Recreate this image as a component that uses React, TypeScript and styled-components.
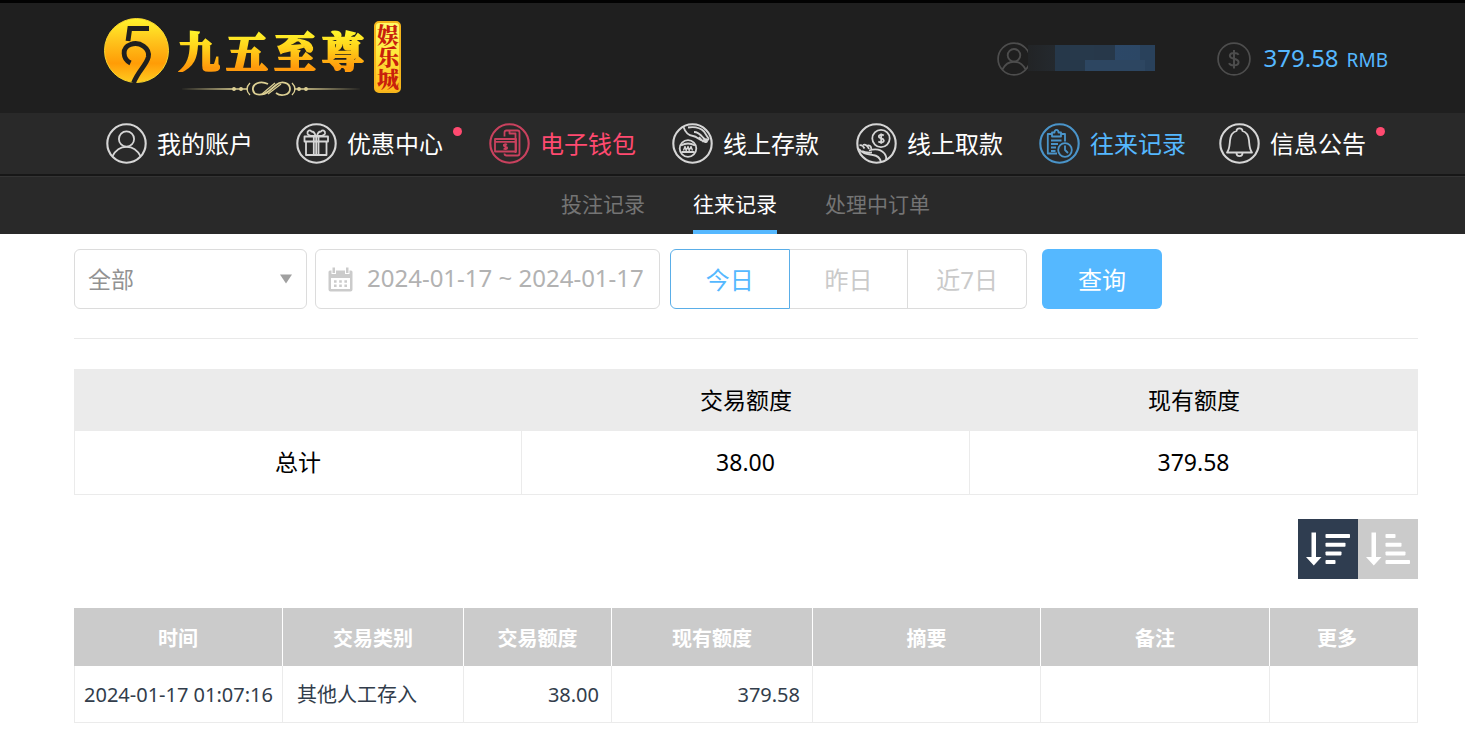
import React from 'react';
import styled, { createGlobalStyle } from 'styled-components';

const blue = '#55b8ff';
const pink = '#ff4a70';
const serif = '"Noto Serif CJK SC", "Noto Sans CJK SC", serif';

const GlobalStyle = createGlobalStyle`
  *, *::before, *::after { box-sizing: border-box; }
  body {
    margin: 0;
    background: #fff;
    color: #000;
    font-family: "Noto Sans", "Noto Sans CJK SC", sans-serif;
  }
  button, input, select { font-family: inherit; margin: 0; }
  a { color: inherit; text-decoration: none; }
`;

const Masthead = styled.header`
  border-top: 3px solid #020202;
  background: #1f1f1f;
`;

const TopBar = styled.div`
  display: flex;
  align-items: center;
  justify-content: space-between;
  height: 110px;
  padding: 0 77px 0 104px;
`;

const Logo = styled.a`
  display: flex;
  align-items: flex-start;
  height: 80px;
`;

const LogoText = styled.span`
  display: flex;
  flex-direction: column;
  margin: 10px 10px 0 8px;
`;

const LogoName = styled.span`
  display: flex;
  gap: 6px;
  font-family: ${serif};
  font-size: 42px;
  font-weight: 900;
  line-height: 44px;

  span {
    background: linear-gradient(#fff32a 10%, #ffd21a 45%, #ff9a0c 90%);
    background-clip: text;
    -webkit-background-clip: text;
    -webkit-text-stroke: 2px transparent;
    color: transparent;
  }
`;

const Flourish = styled.svg`
  display: block;
  margin-top: 8px;
`;

const LogoTag = styled.span`
  display: flex;
  align-items: center;
  justify-content: center;
  width: 27px;
  height: 72px;
  margin-top: 3px;
  border: 2px solid #f5b51c;
  border-radius: 5px;
  background: linear-gradient(#fffb6a, #ffe93c 45%, #ffb81c);
  color: #c8200c;
  font-family: ${serif};
  font-size: 22px;
  font-weight: 900;
  line-height: 24px;
  writing-mode: vertical-rl;
`;

const Status = styled.div`
  display: flex;
  align-items: center;
  gap: 62px;
  margin-top: 2px;
`;

const StatusItem = styled.div`
  display: flex;
  align-items: center;
`;

const HiddenName = styled.span`
  width: 127px;
  height: 26px;
  margin: 0 0 2px -3px;
  background:
    linear-gradient(#27394b, #27394b) 42px 0 / 24px 15px no-repeat,
    linear-gradient(#27384a, #27384a) 57px 0 / 30px 15px no-repeat,
    linear-gradient(#2d4661, #2d4661) 57px 15px / 60px 11px no-repeat,
    linear-gradient(90deg, #222426, #24292e 27px, #26384a 27px, #26384a 57px, #2c4869 57px, #2c4765 112px, #29415b 112px);
`;

const Balance = styled.span`
  display: flex;
  align-items: baseline;
  gap: 8px;
  margin-left: 13px;
  color: ${blue};
  font-size: 24px;
  line-height: 34px;

  small { font-size: 19px; }
`;

const MainNav = styled.nav`
  display: grid;
  grid-template-columns: 190fr 193fr 183fr 184fr 183fr 180fr 168fr;
  align-items: center;
  height: 63px;
  padding: 0 78px 0 106px;
  border-bottom: 2px solid #171717;
  background: #292929;
`;

const NavLink = styled.a<{ $tone?: string }>`
  display: flex;
  align-items: center;
  gap: 10px;
  color: ${p => p.$tone || '#fff'};
  font-size: 24px;
  line-height: 36px;
  white-space: nowrap;

  svg { flex: none; color: ${p => p.$tone || '#d6d6d6'}; opacity: ${p => (p.$tone ? 0.75 : 1)}; }
`;

const Dot = styled.i`
  align-self: flex-start;
  width: 9px;
  height: 9px;
  margin-top: 4px;
  border-radius: 50%;
  background: ${pink};
`;

const SubNav = styled.nav`
  display: flex;
  justify-content: center;
  gap: 48px;
  height: 58px;
  padding-left: 26px;
  border-top: 1px solid #343434;
  background: #292929;
`;

const SubLink = styled.a<{ $active?: boolean }>`
  border-bottom: 4px solid ${p => (p.$active ? blue : 'transparent')};
  color: ${p => (p.$active ? '#fff' : '#747474')};
  font-size: 21px;
  line-height: 54px;
`;

const Content = styled.main`
  padding: 15px 47px 6px 74px;
`;

const Filters = styled.form`
  display: flex;
  padding-bottom: 29px;
  border-bottom: 1px solid #e9e9e9;
`;

const Field = styled.div<{ $width: number }>`
  position: relative;
  display: flex;
  width: ${p => p.$width}px;
  height: 60px;
  border: 1px solid #dcdcdc;
  border-radius: 6px;

  & + & { margin-left: 8px; }
  svg { position: absolute; top: 0; bottom: 0; margin: auto 0; pointer-events: none; }
`;

const SelectArrow = styled.svg`
  right: 14px;
`;

const CalendarIcon = styled.svg`
  left: 12px;
`;

const TypeSelect = styled.select`
  flex: 1;
  appearance: none;
  padding: 0 40px 0 13px;
  border: 0;
  border-radius: 6px;
  background: transparent;
  color: #929292;
  font-size: 23px;
`;

const DateInput = styled.input`
  flex: 1;
  min-width: 0;
  padding: 0 0 4px 51px;
  border: 0;
  border-radius: 6px;
  background: transparent;
  color: #b2b2b2;
  font-size: 24px;
`;

const Segments = styled.div`
  display: flex;
  width: 357px;
  margin: 0 15px 0 10px;
`;

const Segment = styled.button<{ $active?: boolean }>`
  flex: 1 1 0;
  height: 60px;
  padding: 0 0 2px;
  border: 1px solid ${p => (p.$active ? '#5aaee8' : '#dcdcdc')};
  background: #fff;
  color: ${p => (p.$active ? blue : '#cacaca')};
  font-size: 24px;

  &:first-child { border-radius: 6px 0 0 6px; }
  &:last-child { border-radius: 0 6px 6px 0; }
  & + & { border-left: 0; }
`;

const SearchButton = styled.button`
  width: 120px;
  height: 60px;
  padding: 0 0 2px;
  border: 0;
  border-radius: 6px;
  background: ${blue};
  color: #fff;
  font-size: 24px;
`;

const Summary = styled.table`
  width: 100%;
  margin-top: 30px;
  border-collapse: separate;
  border-spacing: 0;
  table-layout: fixed;
  font-size: 23px;
  line-height: 34px;
  text-align: center;

  th { height: 62px; padding: 0; background: #ebebeb; font-weight: 400; }
  td { height: 64px; padding: 0 0 2px; border: solid #ebebeb; border-width: 0 1px 1px 0; }
  td:first-child { border-left-width: 1px; }
`;

const SortBar = styled.div`
  display: flex;
  justify-content: flex-end;
  margin: 24px 0 29px;
`;

const SortButton = styled.button<{ $active?: boolean }>`
  width: 60px;
  height: 60px;
  padding: 0;
  border: 0;
  background: ${p => (p.$active ? '#2f3d50' : '#cbcbcb')};

  svg { display: block; }
`;

const Records = styled.table`
  width: 100%;
  border-collapse: separate;
  border-spacing: 0;
  table-layout: fixed;
  font-size: 20px;
  line-height: 30px;

  th {
    height: 58px;
    padding: 4px 0 0;
    border-right: 1px solid #fff;
    background: #cbcbcb;
    color: #fff;
    font-weight: 700;
  }
  th:last-child { padding-right: 14px; border-right: 0; }
  td {
    height: 57px;
    padding: 2px 12px 0 14px;
    border-right: 1px solid #ebebeb;
    border-bottom: 1px solid #ebebeb;
    color: #323d4b;
    white-space: nowrap;
  }
  td:first-child { padding-left: 9px; padding-right: 0; border-left: 1px solid #ebebeb; }
`;

const Amount = styled.td`
  text-align: right;
`;

type IconName = 'user' | 'gift' | 'wallet' | 'deposit' | 'withdraw' | 'records' | 'bell' | 'dollar';

const shapes: Record<IconName, React.ReactNode> = {
  user: (
    <>
      <circle cx="20.5" cy="16" r="7.6" />
      <path d="M6.5 33.2C9.5 27.2 14.4 23.8 20.5 23.8S31.5 27.2 34.5 33.2" />
    </>
  ),
  gift: (
    <>
      <path d="M8.5 13.5H32V18.5H8.5ZM10 18.5V32H30.5V18.5M17.8 13.5V32M22.5 13.5V32M20.2 13.5V32" />
      <path d="M19.5 13C17 12.5 12.5 14 11.5 10.5 11 7.5 14 6.500 15.5 8.5 17.5 8.5 19 10.5 19.5 13M21 13C23.5 12.5 28 14 29 10.5 29.5 7.5 26.5 6.5 25 8.5 23 8.5 21.5 10.5 21 13" />
    </>
  ),
  wallet: (
    <>
      <path d="M6 16H27V28.5H6ZM6 18.8H27" />
      <path d="M15.5 13.5V9.5Q15.5 7.5 17.5 7.5H28.5Q30.5 7.5 30.5 9.5V30.5Q30.5 32.5 28.5 32.5H17.5Q15.5 32.5 15.5 30.5M20.5 7.5V10.5H26.5V30" />
      <path d="M18 21.8C16.5 20.8 14.5 21.3 14.8 22.6 15 23.8 18 23.4 18.2 24.8 18.3 26.2 15.8 26.4 14.6 25.5M16.5 20.5V27" />
    </>
  ),
  deposit: (
    <>
      <circle cx="16" cy="25.5" r="8.3" />
      <path d="M9 22.5Q16 18.5 23 22.5M9.5 29H22.5" />
      <path d="M11.5 27.5L13 23.5 14.2 27.5 16 23.5 17.2 27.5 19 23.5 20.5 27.5" strokeWidth="1.4" />
      <path d="M11.5 4C13 8.5 16.5 12.5 21 13 25 13.5 27.5 17 31 18M16 4.5C22 3.5 28.5 5 32 8.5L36.5 15.5C36.5 17.5 34.5 17 33.5 15.5M22 9C26 9 28.5 11.5 31 14.5L35 18.5C34 20 32 18.5 30.5 17M27 14L31.5 19" />
    </>
  ),
  withdraw: (
    <>
      <circle cx="25" cy="15.5" r="8.7" />
      <path d="M27.8 12.5C25.5 10.8 22.5 11.8 22.8 13.8 23.2 15.8 27.5 15 27.8 17.3 28 19.5 24.5 20 22.3 18.5M25.2 10.5V20.8" />
      <path d="M3.5 22.5C5.5 21.5 7.5 23.5 8.5 25.5M7 22C9.5 20.5 12 23.5 13 26M11.5 22.5C14.5 21.5 16 25 15 27.5M3 26C7 31.5 11.5 31 17 32 21 32.5 24 35 25 39M13 27.5C19 25.5 25 26.5 28.5 30.5 30.5 33 30.5 35 30 37M6 28C9 30 12 29.5 16 29.5" />
    </>
  ),
  records: (
    <>
      <path d="M13 11H8.8V30.5H18M21.5 11H26V18.5M13 13.5V9.5H15.5C15.5 6 19.5 6 19.5 9.5H22V13.5Z" />
      <path d="M12 17.5H22.5M12 21H19M12 24.5H17M12 28H16.5" />
      <circle cx="26" cy="27" r="6.8" />
      <path d="M26 22.5V27L29 30" />
    </>
  ),
  bell: (
    <>
      <path d="M8 29.5C10.5 26.5 10.5 23 11 17.5 11.5 12.5 13.5 9 17.5 8 17.5 4.5 23.5 4.5 23.5 8 27.5 9 29.5 12.5 30 17.5 30.5 23 30.5 26.5 33 29.5Z" />
      <path d="M17.5 30C17.5 34.2 23.5 34.2 23.5 30" />
    </>
  ),
  dollar: (
    <path d="M26 15.5C24.5 12.5 15.5 12 15.5 16.5 15.5 21.5 26 19 26 24.5 26 29.5 16 29 14.5 25.5M20.5 9.5V32" strokeWidth="2.4" />
  ),
};

function RingIcon({ name, size = 41, color }: { name: IconName; size?: number; color?: string }) {
  return (
    <svg width={size} height={size} viewBox="0 0 41 41" fill="none" stroke={color || 'currentColor'} strokeWidth={color ? 2.2 : 1.8} strokeLinejoin="round" aria-hidden="true">
      <circle cx="20.5" cy="20.5" r="19.2" strokeWidth="2.1" />
      {shapes[name]}
    </svg>
  );
}

function Emblem() {
  return (
    <svg width="66" height="66" viewBox="0 0 66 66" aria-hidden="true">
      <defs>
        <linearGradient id="gold" x1="0" y1="0" x2="0" y2="1">
          <stop offset="0" stopColor="#fff42c" />
          <stop offset="0.35" stopColor="#ffc41c" />
          <stop offset="0.7" stopColor="#ff9c06" />
          <stop offset="1" stopColor="#ffcb20" />
        </linearGradient>
      </defs>
      <circle cx="32.5" cy="32.5" r="32" fill="url(#gold)" stroke="#f8d52e" strokeWidth="1" />
      <g fill="none" stroke="#1f1f1f" strokeWidth="4.8">
        <path d="M45 10.5H25.8L24 23" />
        <path d="M26.500 45C18.5 41 17.5 29.5 26.500 26.5 36 23 46 30.500 44.300 39 42.500 47 34 53 29.500 65" />
      </g>
    </svg>
  );
}

function SortIcon({ ends }: { ends: number[] }) {
  return (
    <svg width="60" height="60" viewBox="0 0 60 60" fill="#fff" aria-hidden="true">
      <path d="M13.5 13.5H18V38H23.5L15.8 46.5 8 38H13.5Z" />
      {ends.map((end, i) => (
        <rect key={i} x="27.5" y={15 + i * 8.7} width={end - 27.5} height="4" rx="0.8" />
      ))}
    </svg>
  );
}

const navItems: { label: string; icon: IconName; tone?: string; dot?: boolean }[] = [
  { label: '我的账户', icon: 'user' },
  { label: '优惠中心', icon: 'gift', dot: true },
  { label: '电子钱包', icon: 'wallet', tone: pink },
  { label: '线上存款', icon: 'deposit' },
  { label: '线上取款', icon: 'withdraw' },
  { label: '往来记录', icon: 'records', tone: blue },
  { label: '信息公告', icon: 'bell', dot: true },
];

const columns = [
  { title: '时间', share: 209 },
  { title: '交易类别', share: 181 },
  { title: '交易额度', share: 148 },
  { title: '现有额度', share: 201 },
  { title: '摘要', share: 228 },
  { title: '备注', share: 229 },
  { title: '更多', share: 148 },
];

export default function App() {
  return (
    <>
      <GlobalStyle />
      <Masthead>
        <TopBar>
          <Logo href="#" aria-label="九五至尊娱乐城">
            <Emblem />
            <LogoText>
              <LogoName>
                {['九', '五', '至', '尊'].map(c => <span key={c}>{c}</span>)}
              </LogoName>
              <Flourish width="186" height="18" viewBox="0 0 186 18" fill="none" stroke="#dccf93" strokeWidth="1.3" aria-hidden="true">
                <path d="M2 9L52 8.2V9.8ZM184 9L130 8.2V9.8Z" fill="#dccf93" stroke="none" />
                <path d="M52 9H70M116 9H130" />
                <circle cx="56" cy="9" r="1.3" fill="#dccf93" />
                <circle cx="63" cy="9" r="1.3" fill="#dccf93" />
                <circle cx="121" cy="9" r="1.3" fill="#dccf93" />
                <circle cx="128" cy="9" r="1.3" fill="#dccf93" />
                <path d="M72 3Q66 9 72 15M114 3Q120 9 114 15" />
                <path d="M90 4C82 0 74 4 75 10 76 16 85 16 91 11L98 5C104 0 112 3 112 9 112 15 103 17 98 13" strokeWidth="1.8" />
                <path d="M84 14L97 3M90 14L103 4" />
              </Flourish>
            </LogoText>
            <LogoTag>娱乐城</LogoTag>
          </Logo>
          <Status>
            <StatusItem>
              <RingIcon name="user" size={34} color="#4d4d4d" />
              <HiddenName />
            </StatusItem>
            <StatusItem>
              <RingIcon name="dollar" size={34} color="#4d4d4d" />
              <Balance>379.58 <small>RMB</small></Balance>
            </StatusItem>
          </Status>
        </TopBar>
        <MainNav>
          {navItems.map(item => (
            <NavLink key={item.label} href="#" $tone={item.tone}>
              <RingIcon name={item.icon} />
              {item.label}
              {item.dot && <Dot />}
            </NavLink>
          ))}
        </MainNav>
        <SubNav>
          <SubLink href="#">投注记录</SubLink>
          <SubLink href="#" $active>往来记录</SubLink>
          <SubLink href="#">处理中订单</SubLink>
        </SubNav>
      </Masthead>

      <Content>
        <Filters onSubmit={e => e.preventDefault()}>
          <Field $width={233}>
            <TypeSelect aria-label="交易类别" defaultValue="all">
              <option value="all">全部</option>
            </TypeSelect>
            <SelectArrow width="12" height="10" viewBox="0 0 12 10" aria-hidden="true">
              <path d="M0 0.5H12L6 9.5Z" fill="#a0a0a0" />
            </SelectArrow>
          </Field>
          <Field $width={345}>
            <CalendarIcon width="25" height="25" viewBox="0 0 25 25" aria-hidden="true">
              <path d="M0.5 5Q0.5 3.5 2 3.5H3.5V7H8V3.5H17V7H21.5V3.5H23Q24.5 3.5 24.5 5V22.5Q24.5 24.5 22.5 24.5H2.5Q0.5 24.5 0.5 22.5ZM3 11V22H22V11Z" fill="#cbcbcb" fillRule="evenodd" />
              <path d="M4.5 0.5H7V6H4.5ZM18 0.5H20.5V6H18Z" fill="#cbcbcb" />
              <path d="M6 14.5H19M6 18.8H19" stroke="#cbcbcb" strokeWidth="2.5" strokeDasharray="2.6 2.6" />
            </CalendarIcon>
            <DateInput aria-label="时间" defaultValue="2024-01-17 ~ 2024-01-17" />
          </Field>
          <Segments>
            <Segment type="button" $active aria-pressed>今日</Segment>
            <Segment type="button">昨日</Segment>
            <Segment type="button">近7日</Segment>
          </Segments>
          <SearchButton type="submit">查询</SearchButton>
        </Filters>

        <Summary>
          <thead>
            <tr>
              <th />
              <th scope="col">交易额度</th>
              <th scope="col">现有额度</th>
            </tr>
          </thead>
          <tbody>
            <tr>
              <td>总计</td>
              <td>38.00</td>
              <td>379.58</td>
            </tr>
          </tbody>
        </Summary>

        <SortBar>
          <SortButton type="button" $active aria-label="降序">
            <SortIcon ends={[52, 47.5, 43.5, 37.5]} />
          </SortButton>
          <SortButton type="button" aria-label="升序">
            <SortIcon ends={[37.5, 43.5, 47.5, 52]} />
          </SortButton>
        </SortBar>

        <Records>
          <colgroup>
            {columns.map(c => <col key={c.title} style={{ width: `${(c.share / 1344) * 100}%` }} />)}
          </colgroup>
          <thead>
            <tr>
              {columns.map(c => <th key={c.title} scope="col">{c.title}</th>)}
            </tr>
          </thead>
          <tbody>
            <tr>
              <td>2024-01-17 01:07:16</td>
              <td>其他人工存入</td>
              <Amount>38.00</Amount>
              <Amount>379.58</Amount>
              <td />
              <td />
              <td />
            </tr>
          </tbody>
        </Records>
      </Content>
    </>
  );
}
